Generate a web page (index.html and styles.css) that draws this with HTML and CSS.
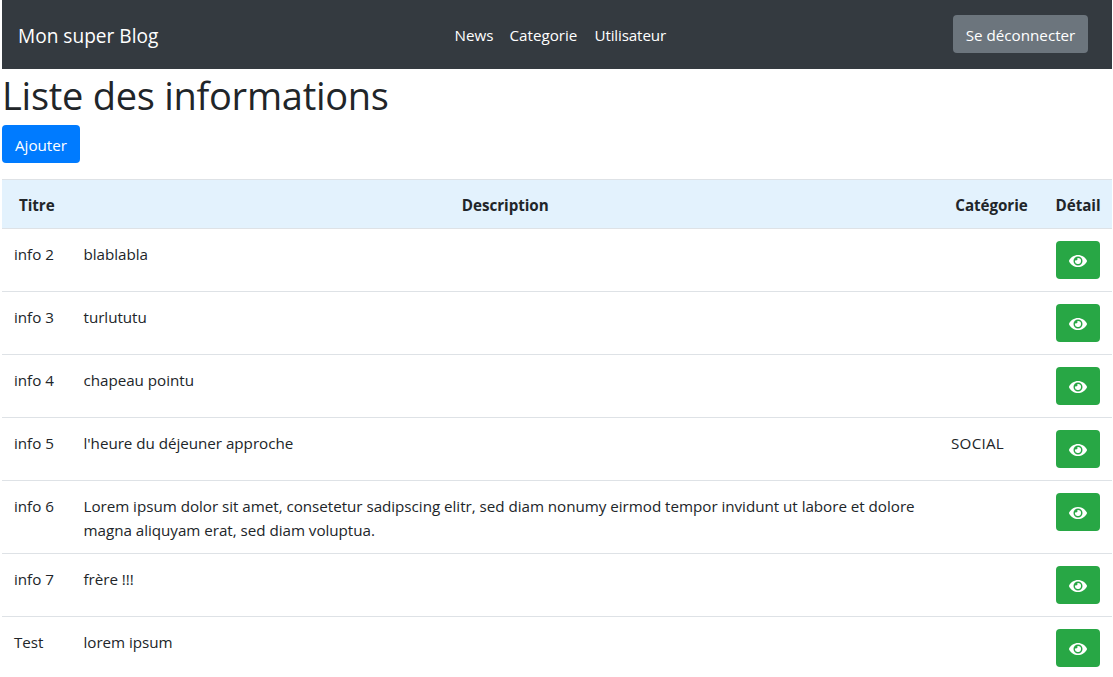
FILE: index.html
```html
<!DOCTYPE html>
<html lang="fr">
<head>
<meta charset="utf-8">
<title>Mon super Blog</title>
<link rel="stylesheet" href="styles.css">
</head>
<body>
<svg width="0" height="0" class="sprite" aria-hidden="true">
  <symbol id="eye" viewBox="0 0 576 512"><path d="M572.52 241.4C518.29 135.59 410.93 64 288 64S57.68 135.64 3.48 241.41a32.35 32.35 0 0 0 0 29.19C57.71 376.41 165.07 448 288 448s230.32-71.64 284.52-177.41a32.35 32.35 0 0 0 0-29.19zM288 400a144 144 0 1 1 144-144 143.93 143.93 0 0 1-144 144zm0-240a95.31 95.31 0 0 0-25.31 3.79 47.85 47.85 0 0 1-66.9 66.9A95.78 95.78 0 1 0 288 160z"/></symbol>
</svg>
<nav class="navbar">
  <a class="brand">Mon super Blog</a>
  <div class="links"><a class="news">News</a><a class="cat">Categorie</a><a class="user">Utilisateur</a></div>
  <button class="btn btn-secondary">Se déconnecter</button>
</nav>
<main>
  <h1>Liste des informations</h1>
  <button class="btn btn-primary">Ajouter</button>
  <table class="table">
    <colgroup><col class="c-title"><col class="c-desc"><col class="c-cat"><col class="c-detail"></colgroup>
    <thead><tr><th>Titre</th><th>Description</th><th>Catégorie</th><th>Détail</th></tr></thead>
    <tbody>
      <tr><td>info 2</td><td>blablabla</td><td></td><td class="action"><button class="btn btn-success"><svg><use href="#eye"/></svg></button></td></tr>
      <tr><td>info 3</td><td>turlututu</td><td></td><td class="action"><button class="btn btn-success"><svg><use href="#eye"/></svg></button></td></tr>
      <tr><td>info 4</td><td>chapeau pointu</td><td></td><td class="action"><button class="btn btn-success"><svg><use href="#eye"/></svg></button></td></tr>
      <tr><td>info 5</td><td>l'heure du déjeuner approche</td><td class="wide">SOCIAL</td><td class="action"><button class="btn btn-success"><svg><use href="#eye"/></svg></button></td></tr>
      <tr><td>info 6</td><td>Lorem ipsum dolor sit amet, consetetur sadipscing elitr, sed diam nonumy eirmod tempor invidunt ut labore et dolore<br>magna aliquyam erat, sed diam voluptua.</td><td></td><td class="action"><button class="btn btn-success"><svg><use href="#eye"/></svg></button></td></tr>
      <tr><td>info 7</td><td>frère !!!</td><td></td><td class="action"><button class="btn btn-success"><svg><use href="#eye"/></svg></button></td></tr>
      <tr><td>Test</td><td>lorem ipsum</td><td></td><td class="action"><button class="btn btn-success"><svg><use href="#eye"/></svg></button></td></tr>
    </tbody>
  </table>
</main>
</body>
</html>
```
FILE: styles.css
```css
* { box-sizing: border-box; }
body {
  margin: 0 1px 0 2px;
  background: #fff;
  color: #212529;
  font: 15.2px/24px "Open Sans", "Noto Sans", sans-serif;
  overflow: hidden;
}
.sprite { display: none; }
.navbar {
  display: flex;
  align-items: center;
  height: 69px;
  padding: 0 24px 1px 16px;
  background: #343a40;
  color: #fff;
}
.brand { width: 141px; font-size: 19.1px; line-height: 30px; white-space: nowrap; padding-top: 3px; }
.links { display: flex; gap: 16px; padding-top: 2px; margin: 0 auto 0 295.5px; }
.news { width: 39px; }
.cat { width: 69px; }
.user { width: 71px; letter-spacing: -0.15px; }
.btn {
  display: block;
  height: 38px;
  padding: 2px 0 0;
  border: 0;
  border-radius: 4px;
  color: #fff;
  font: inherit;
  text-align: center;
  white-space: nowrap;
}
.btn-secondary { width: 135px; background: #6c757d; }
.btn-primary { width: 78px; background: #007bff; }
.btn-success { width: 44px; background: #28a745; }
.btn-success svg { display: block; width: 18px; height: 16px; margin: 0 auto; fill: #fff; }
h1 {
  margin: 0 0 8px;
  font-size: 38px;
  font-weight: 400;
  letter-spacing: -0.27px;
  line-height: 48px;
  padding-top: 2px;
  height: 48px;
  white-space: nowrap;
}
.table {
  width: 1110px;
  margin-top: 16px;
  border-collapse: separate;
  border-spacing: 0;
  table-layout: fixed;
}
.c-title { width: 69.5px; }
.c-cat { width: 105px; }
.c-detail { width: 68px; }
th, td { border-top: 1px solid #dee2e6; vertical-align: top; }
th { padding: 13px 0 11px; background: #e3f2fd; text-align: center; font-weight: 700; letter-spacing: -0.05px; }
td { padding: 13px 12px 11px; white-space: nowrap; letter-spacing: -0.03px; }
td.wide { letter-spacing: 0.25px; }
td.action { padding: 12px; }
```
